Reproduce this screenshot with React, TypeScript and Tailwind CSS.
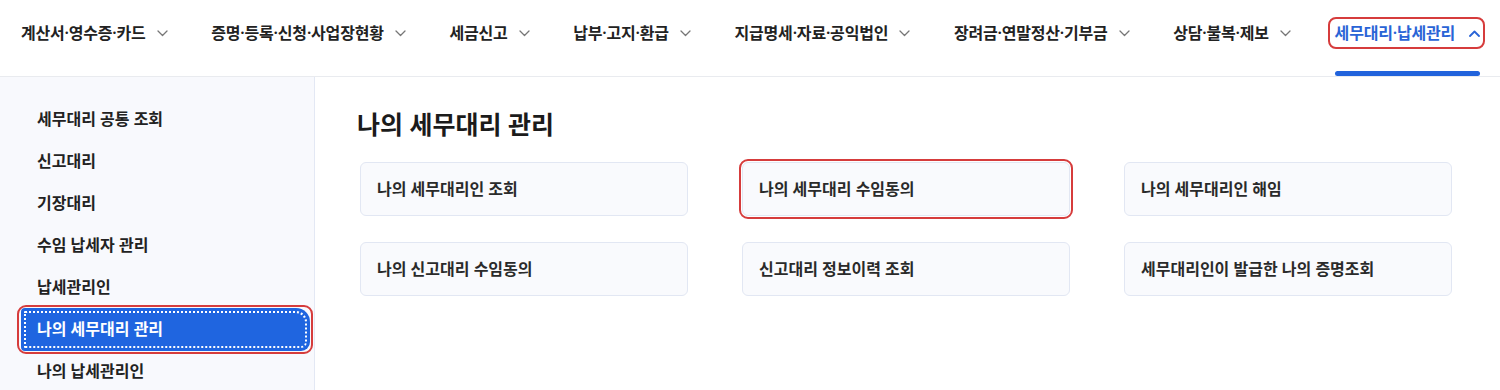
import React from "react";

const navItems = [
  "계산서·영수증·카드",
  "증명·등록·신청·사업장현황",
  "세금신고",
  "납부·고지·환급",
  "지급명세·자료·공익법인",
  "장려금·연말정산·기부금",
  "상담·불복·제보",
];

const sideItems = [
  "세무대리 공통 조회",
  "신고대리",
  "기장대리",
  "수임 납세자 관리",
  "납세관리인",
  "나의 세무대리 관리",
  "나의 납세관리인",
];

const cards = [
  "나의 세무대리인 조회",
  "나의 세무대리 수임동의",
  "나의 세무대리인 해임",
  "나의 신고대리 수임동의",
  "신고대리 정보이력 조회",
  "세무대리인이 발급한 나의 증명조회",
];

function ChevronDown() {
  return (
    <svg width="11" height="7" viewBox="0 0 11 7" fill="none" className="shrink-0">
      <polyline points="1,1 5.5,5.5 10,1" stroke="#777" strokeWidth="1.3" strokeLinecap="round" strokeLinejoin="round" />
    </svg>
  );
}

function ChevronUp() {
  return (
    <svg width="11" height="7" viewBox="0 0 11 7" fill="none" className="shrink-0">
      <polyline points="1,6 5.5,1.5 10,6" stroke="#2a64d6" strokeWidth="1.8" strokeLinecap="round" strokeLinejoin="round" />
    </svg>
  );
}

export default function App() {
  return (
    <div
      className="h-[390px] w-[1500px] overflow-hidden bg-white text-[#222]"
      style={{ fontFamily: '"Noto Sans", "Noto Sans CJK KR", sans-serif' }}
    >
      {/* Top navigation */}
      <nav className="flex h-[77px] items-start justify-between border-b border-[#e9ebef] pl-[21px] pr-[20px]">
        {navItems.map((t) => (
          <div key={t} className="flex h-[66px] items-center gap-[11px]">
            <span className="text-[16px] font-semibold tracking-[-0.2px] text-[#222]">{t}</span>
            <ChevronDown />
          </div>
        ))}
        <div className="relative flex h-[76px] flex-col">
          <div className="relative flex h-[66px] items-center gap-[14px]">
            <span className="pointer-events-none absolute -left-[7px] -right-[5px] top-[17px] h-[32px] rounded-[8px] border-2 border-[#d63c3c]" />
            <span className="text-[16px] font-semibold tracking-[-0.2px] text-[#2a64d6]">세무대리·납세관리</span>
            <ChevronUp />
          </div>
          <div className="mt-auto h-[5px] w-full rounded-full bg-[#2163dc]" />
        </div>
      </nav>

      <div className="flex h-[313px]">
        {/* Sidebar */}
        <aside className="w-[315px] shrink-0 border-r border-[#e3e8f4] bg-[#f8f9fd] pt-[21px]">
          <ul className="flex flex-col">
            {sideItems.map((t) =>
              t === "나의 세무대리 관리" ? (
                <li key={t} className="flex h-[42px] items-center pl-[21px] pr-[4px]">
                  <div className="relative flex h-[43px] w-full items-center">
                    <span className="pointer-events-none absolute -bottom-[3px] -left-[4px] -right-[3px] -top-[3px] rounded-[9px] border-2 border-[#d63c3c]" />
                    <div className="flex h-full w-full items-center rounded-bl-[4px] rounded-br-[9px] rounded-tl-[4px] rounded-tr-[14px] bg-[#1f65e0] pl-[16px] outline-2 outline-offset-[-5px] outline-white outline-dotted">
                      <span className="text-[16px] font-semibold text-white">{t}</span>
                    </div>
                  </div>
                </li>
              ) : (
                <li key={t} className="flex h-[42px] items-center pl-[37px]">
                  <span className="text-[16px] font-semibold text-[#222]">{t}</span>
                </li>
              )
            )}
          </ul>
        </aside>

        {/* Main */}
        <main className="flex-1 pl-[42px] pt-[31px]">
          <h1 className="h-[32px] text-[25px] font-bold leading-[32px] text-[#1b1b1b]">나의 세무대리 관리</h1>
          <div className="ml-[3px] mt-[22px] grid w-[1092px] grid-cols-3 gap-x-[54px] gap-y-[26px]">
            {cards.map((t) => (
              <div
                key={t}
                className={
                  "flex h-[54px] items-center rounded-[6px] border border-[#e2e7f3] bg-[#f9fafd] pl-[16px] " +
                  (t === "나의 세무대리 수임동의" ? "outline-2 outline-offset-[1px] outline-[#d63c3c]" : "")
                }
              >
                <span className="text-[16px] font-semibold text-[#2a2a2a]">{t}</span>
              </div>
            ))}
          </div>
        </main>
      </div>
    </div>
  );
}
